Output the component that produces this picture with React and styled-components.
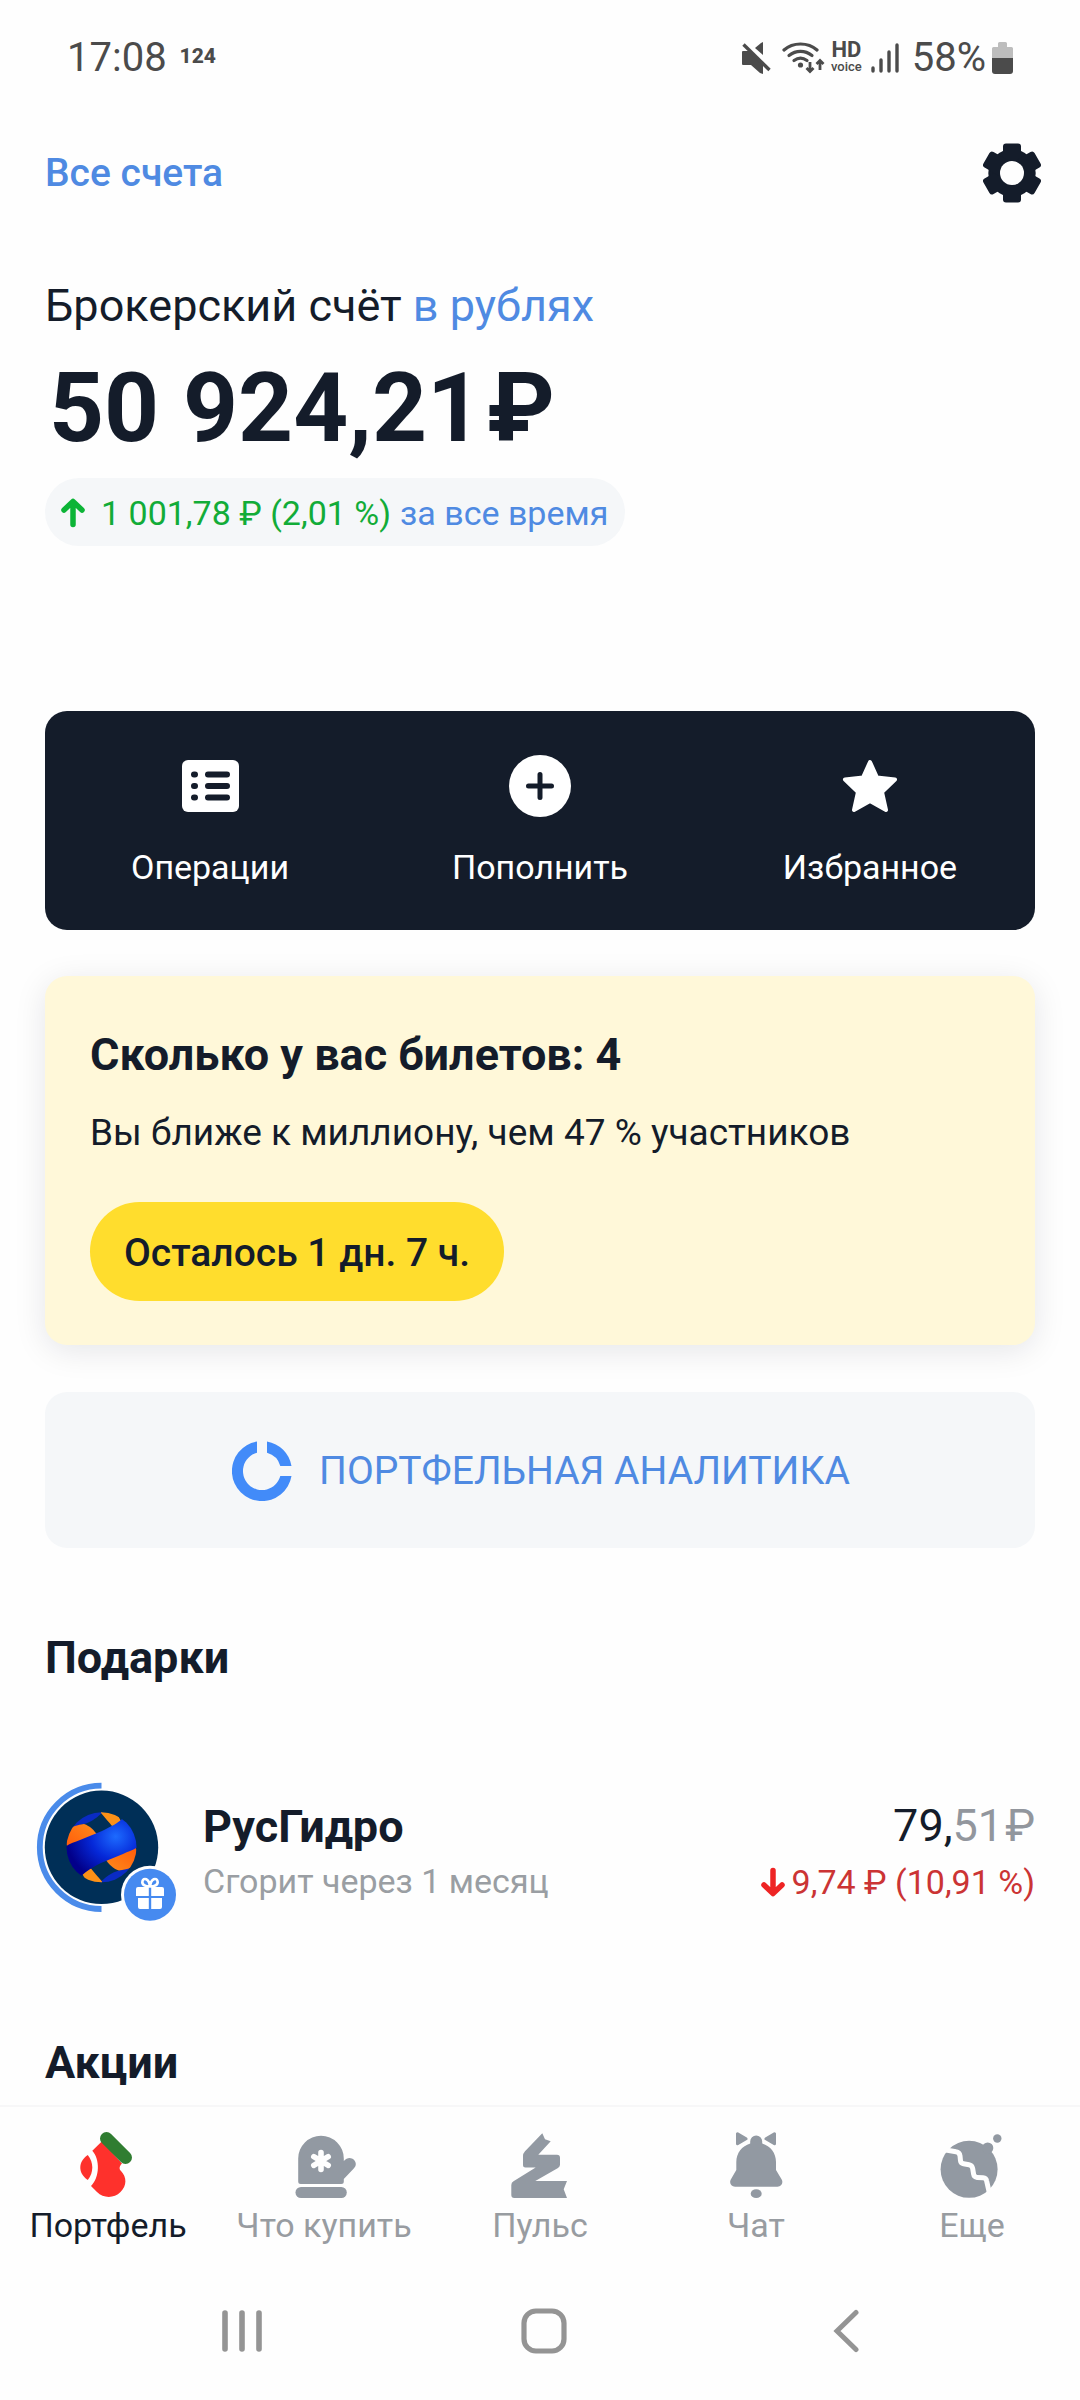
import React from "react";
import styled, { createGlobalStyle } from "styled-components";

const GlobalStyle = createGlobalStyle`
  * {
    box-sizing: border-box;
  }

  body {
    margin: 0;
    background: #fefefe;
    color: #141c2a;
    font-family: Roboto, "Noto Sans", sans-serif;
  }

  svg {
    display: block;
    flex-shrink: 0;
  }

  button {
    border: 0;
    padding: 0;
    background: none;
    color: inherit;
    font: inherit;
    cursor: pointer;
  }

  a {
    color: inherit;
    text-decoration: none;
  }
`;

const Page = styled.div`
  display: flex;
  flex-direction: column;
  min-height: 100vh;
`;

const StatusBar = styled.div`
  display: flex;
  justify-content: space-between;
  align-items: center;
  height: 115px;
  padding: 0 67px;
  color: #4b4b4b;
  font-size: 40px;
  line-height: 48px;
`;

const StatusGroup = styled.div`
  display: flex;
  align-items: center;
  gap: ${props => props.$gap}px;
`;

const Carrier = styled.span`
  padding-bottom: 4px;
  font-size: 21px;
  font-weight: 800;
  line-height: 24px;
`;

const HdVoice = styled.span`
  display: flex;
  flex-direction: column;
  align-items: center;
  margin: 0 -2px 0 -5px;
  padding-bottom: 3px;
  font-size: 13px;
  font-weight: 500;
  line-height: 13px;
`;

const Hd = styled.b`
  font-size: 22px;
  line-height: 20px;
`;

const Battery = styled.span`
  display: flex;
  align-items: center;
  gap: 6px;
`;

const Header = styled.header`
  display: flex;
  justify-content: space-between;
  align-items: center;
  height: 115px;
  padding: 0 38px 0 45px;
`;

const AccountsLink = styled.a`
  && {
    color: #4f8ae2;
  }
  font-size: 39px;
  font-weight: 500;
  line-height: 48px;
`;

const Main = styled.main`
  display: flex;
  flex-direction: column;
  padding: 48px 45px 12px;
`;

const AccountTitle = styled.h1`
  margin: 0 0 18px;
  font-size: 45px;
  font-weight: 400;
  line-height: 56px;
`;

const CurrencyButton = styled.button`
  && {
    color: #4f8ae2;
  }
`;

const Amount = styled.p`
  display: flex;
  gap: 5px;
  margin: 0 0 14px;
  padding-left: 4px;
  font-size: 96px;
  font-weight: 700;
  line-height: 112px;
`;

const ProfitPill = styled.button`
  && {
    display: flex;
    align-items: center;
    align-self: flex-start;
    height: 68px;
    margin-bottom: 165px;
    padding: 2px 17px 0 16px;
    border-radius: 34px;
    background: #f5f7f9;
    color: #4f8ae2;
    font-size: 34px;
    line-height: 44px;
  }
`;

const Profit = styled.span`
  margin: 0 9px 0 16px;
  color: #12ac38;
`;

const Actions = styled.div`
  display: grid;
  grid-template-columns: repeat(3, 1fr);
  margin-bottom: 46px;
  border-radius: 22px;
  background: #141c2a;
  color: #fff;
`;

const Action = styled.button`
  && {
    display: flex;
    flex-direction: column;
    align-items: center;
    gap: 28px;
    padding: 44px 0 41px;
    font-size: 34px;
    line-height: 44px;
  }
`;

const Tickets = styled.section`
  display: flex;
  flex-direction: column;
  align-items: flex-start;
  margin-bottom: 47px;
  padding: 51px 45px 44px;
  border-radius: 22px;
  background: #fff8d9;
  box-shadow: 0 6px 32px rgba(0, 16, 36, 0.1);
`;

const CardTitle = styled.h2`
  margin: 0;
  font-size: 45px;
  font-weight: 700;
  line-height: 56px;
`;

const TicketsText = styled.p`
  margin: 26px 0 45px;
  font-size: 37px;
  line-height: 48px;
`;

const TimeLeft = styled.button`
  && {
    height: 99px;
    padding: 2px 34px 0;
    border-radius: 50px;
    background: #ffdd2d;
    font-size: 39px;
    font-weight: 500;
  }
`;

const Analytics = styled.button`
  && {
    display: flex;
    justify-content: center;
    align-items: center;
    gap: 27px;
    height: 156px;
    margin-bottom: 82px;
    padding: 2px 0 0 2px;
    border-radius: 22px;
    background: #f5f7f9;
    color: #4f8ae2;
    font-size: 39px;
    text-transform: uppercase;
  }
`;

const Holding = styled.a`
  display: flex;
  align-items: center;
  margin: 96px 0 111px -9px;
`;

const HoldingInfo = styled.div`
  display: flex;
  flex-direction: column;
  flex: 1;
  gap: 4px;
  padding: 0 0 5px 23px;
`;

const HoldingValue = styled.div`
  display: flex;
  flex-direction: column;
  align-items: flex-end;
  gap: 6px;
  padding-bottom: 5px;
`;

const Name = styled.span`
  font-size: 45px;
  font-weight: 700;
  line-height: 56px;
`;

const Note = styled.span`
  color: #9a9ea3;
  font-size: 34px;
  line-height: 44px;
`;

const Price = styled.span`
  display: flex;
  font-size: 45px;
  line-height: 56px;
`;

const Cents = styled.span`
  display: flex;
  gap: 2px;
  color: #92969d;
`;

const Loss = styled.span`
  display: flex;
  align-items: center;
  gap: 7px;
  color: #cb3434;
  font-size: 34px;
  line-height: 44px;
`;

const Bottom = styled.div`
  margin-top: auto;
`;

const Tabs = styled.nav`
  display: grid;
  grid-template-columns: repeat(5, 1fr);
  border-top: 2px solid #f7f7f8;
`;

const Tab = styled.a`
  display: flex;
  flex-direction: column;
  align-items: center;
  gap: 4px;
  padding: 24px 0 15px;
  font-size: 34px;
  line-height: 44px;
  white-space: nowrap;
  && {
    color: ${props => (props.$active ? "#141c2a" : "#989ca1")};
  }
`;

const SystemNav = styled.div`
  display: grid;
  grid-template-columns: repeat(3, 1fr);
  height: 138px;
  padding: 0 83px 0 91px;
`;

const SystemButton = styled.button`
  && {
    display: flex;
    justify-content: center;
    align-items: center;
  }
`;

const GREY = "#9299a2";

const MuteIcon = () => (
  <svg width="30" height="32" viewBox="0 0 30 32" fill="#4b4b4b">
    <path d="M2 9h6l14 14v9l-3-1-9-8H2a1 1 0 0 1-1-1V10a1 1 0 0 1 1-1z" />
    <path d="M22 0v13l-8-7 6-5z" />
    <path d="M2.500 2.500l26 25.500" stroke="#4b4b4b" strokeWidth="3.400" />
  </svg>
);

const WifiIcon = () => (
  <svg width="43" height="32" viewBox="0 0 43 32" fill="none" stroke="#4b4b4b">
    <g strokeWidth="3.200" strokeLinecap="round">
      <path d="M2 8C11 0 26 0 35 8" />
      <path d="M7 13.500c7-5.500 16-5.500 23 0" />
      <path d="M12 18.500c4-3 9-3 13 0" />
    </g>
    <circle cx="18.500" cy="23" r="2.600" fill="#4b4b4b" stroke="none" />
    <path d="M28 20v9M24.500 26l3.500 3.500 3.500-3.500" strokeWidth="2.800" />
    <path d="M38 28v-9M34.500 22l3.500-3.500 3.500 3.500" strokeWidth="2.800" />
  </svg>
);

const SignalIcon = () => (
  <svg width="30" height="30" viewBox="0 0 30 30" stroke="#4b4b4b" strokeWidth="3.400" strokeLinecap="round">
    <path d="M2 25v3M10 17v11M18 9v19M26 2v26" />
  </svg>
);

const BatteryIcon = () => (
  <svg width="21" height="32" viewBox="0 0 21 32">
    <path d="M6 1.500Q6 0 7.500 0h6Q15 0 15 1.500V5h4.500Q21 5 21 6.500V16H0V6.500Q0 5 1.500 5H6z" fill="#bdbdbd" />
    <path d="M0 16h21v13q0 3-3 3H3q-3 0-3-3z" fill="#4b4b4b" />
  </svg>
);

const GearIcon = () => (
  <svg width="60" height="60" viewBox="-30 -30 60 60" fill="#141c2a">
    <circle r="23.700" />
    {[0, 60, 120].map(angle => (
      <rect key={angle} x="-9" y="-29.500" width="18" height="59" rx="3" transform={`rotate(${angle})`} />
    ))}
    <circle r="12" fill="#fefefe" />
  </svg>
);

const ArrowIcon = ({ down }) => (
  <svg
    width="24"
    height="30"
    viewBox="0 0 24 30"
    fill="none"
    stroke={down ? "#ee2424" : "#0cb437"}
    strokeWidth="5.500"
    strokeLinecap="round"
    strokeLinejoin="round"
  >
    {down ? <path d="M12 3.500v22M3 18l9 8.500 9-8.500" /> : <path d="M12 26.500v-22M3 12l9-8.500 9 8.500" />}
  </svg>
);

const OperationsIcon = () => (
  <svg width="62" height="62" viewBox="0 0 62 62">
    <rect x="3" y="5" width="57" height="52" rx="6" fill="#fff" />
    <path
      d="M15 19.500h1M15 31h1M15 42.500h1M29 19.500h19M29 31h19M29 42.500h19"
      stroke="#141c2a"
      strokeWidth="6"
      strokeLinecap="round"
    />
  </svg>
);

const PlusIcon = () => (
  <svg width="62" height="62" viewBox="0 0 62 62">
    <circle cx="31" cy="31" r="31" fill="#fff" />
    <path d="M31 19.500v23M19.500 31h23" stroke="#141c2a" strokeWidth="5" strokeLinecap="round" />
  </svg>
);

const StarIcon = () => (
  <svg width="62" height="62" viewBox="0 0 62 62">
    <path
      d="M31 7l7 15.500 18 2-13 12.500 4 18-16-9-16 9 4-18L6 24.500l18-2z"
      fill="#fff"
      stroke="#fff"
      strokeWidth="4"
      strokeLinejoin="round"
    />
  </svg>
);

const DonutIcon = () => (
  <svg width="60" height="60" viewBox="0 0 60 60" fill="#428bf9">
    <path d="M25 0.500A30 30 0 1 0 59.500 35H48.300A19 19 0 1 1 25 11.700z" />
    <path d="M35 0.500A30 30 0 0 1 59.500 25H48.300A19 19 0 0 0 35 11.700z" />
  </svg>
);

const RusHydroLogo = () => (
  <svg width="144" height="142" viewBox="0 0 144 142">
    <defs>
      <radialGradient id="band" cx="0.680" cy="0.350" r="0.650">
        <stop offset="0" stopColor="#1d6bff" />
        <stop offset="0.500" stopColor="#0528d8" />
        <stop offset="1" stopColor="#02008a" />
      </radialGradient>
      <linearGradient id="flame" x1="0" y1="1" x2="1" y2="0">
        <stop offset="0" stopColor="#ff5a0a" />
        <stop offset="1" stopColor="#ff8c1c" />
      </linearGradient>
      <clipPath id="sphere">
        <circle cx="65.500" cy="65.300" r="35" />
      </clipPath>
      <g id="half">
        <path d="M30 48C38 34 50 28 68 29C63 34 56 40 48 42C42 43 36 46 30 48z" fill="#0a2bc4" />
        <path d="M30 62V48C36 44 42 43 48 42C54 44 58 48 62 54L32 66z" fill="url(#flame)" />
        <path d="M65 29L80 30L86 41C84 44 80 44 76 44C73 40 69 36 65 31z" fill="#fd9117" />
      </g>
    </defs>
    <path d="M65.500 3.600a61.700 61.700 0 0 0 0 123.400" fill="none" stroke="#4a8bea" strokeWidth="5.800" />
    <circle cx="65.500" cy="65.300" r="56.700" fill="#002f57" />
    <g clipPath="url(#sphere)">
      <use href="#half" />
      <use href="#half" transform="rotate(180 65.500 65.300)" />
      <path
        d="M28 66C33 61 38 61 44 58L66 49C76 44 82 41 86 37L104 30V63C98 69 93 69 87 72L65 81C55 86 51 89 45 94L28 100z"
        fill="url(#band)"
      />
    </g>
    <circle cx="114" cy="112.700" r="29" fill="#fefefe" />
    <circle cx="114" cy="112.700" r="26" fill="#468af0" />
    <path
      d="M102 105h10.800v9H100v-7q0-2 2-2zM115.200 105H126q2 0 2 2v7h-12.800zM102 116h10.800v11H104q-2 0-2-2zM115.200 116H126v9q0 2-2 2h-8.800z"
      fill="#fff"
    />
    <path
      d="M114 104.500c-5 0-8.500-2-7.500-5.500s6.500-3 7.500 5.500c1-8.500 6.500-9 7.500-5.500s-2.500 5.500-7.500 5.500z"
      fill="none"
      stroke="#fff"
      strokeWidth="2.600"
    />
  </svg>
);

const StockingIcon = () => (
  <svg width="66" height="68" viewBox="0 0 66 68">
    <path
      d="M27 10.300L17.300 19.700C25 28 25 46 16 55l6 6c6.500 6.500 17 6.500 23.500 0 6.500-6 6.500-15 .5-21-2-2-2-4.500 1-7.500z"
      fill="#fe312c"
    />
    <path d="M12.800 24c6 7.500 6 17.500 0 25-10-6.500-10-18.500 0-25z" fill="#fe312c" />
    <path d="M31.500 7.500L50.500 26.500" stroke="#307d31" strokeWidth="13" strokeLinecap="round" />
  </svg>
);

const MittenIcon = () => (
  <svg width="66" height="68" viewBox="0 0 66 68" fill={GREY}>
    <path d="M7.200 27.500a22.800 22.800 0 0 1 45.600 0v2.500c5-6 12-2 12 3 0 2-1 3.500-2.500 5L52.800 48v2.500q0 2.500-2.500 2.500H9.700q-2.500 0-2.500-2.500z" />
    <rect x="4.500" y="56" width="51.300" height="11" rx="5.500" />
    <path
      d="M30 21.500v17M22.800 25.700l14.400 8.600M37.200 25.700l-14.400 8.600"
      stroke="#fefefe"
      strokeWidth="5.600"
      strokeLinecap="round"
    />
  </svg>
);

const PulseIcon = () => (
  <svg width="66" height="68" viewBox="0 0 66 68" fill={GREY}>
    <path d="M35.300 2.300L38 8.300l5.700 2L31.300 23.700H50q3 0 3 3v7q0 2-2 3.300L28.300 50H60l-3.300 8.300L60 67H7.300q-3 0-3-3V54q0-2.500 2.200-3.800L28.700 36.600H18.500q-2.500 0-2.500-2.500V25q0-2.500 2-4.700z" />
  </svg>
);

const BellIcon = () => (
  <svg width="66" height="68" viewBox="0 0 66 68" fill={GREY}>
    <path d="M27.200 10.500a6 6 0 0 1 12 0v2C47.500 15 53 22 53 31v8l5.700 9.500c1.800 3.500-.2 7.200-4.200 7.200H12c-4 0-6-3.700-4.200-7.200L13.300 39v-8c0-9 5.700-16 13.900-18.500z" />
    <ellipse cx="33.200" cy="62.700" rx="5.500" ry="4.400" />
    <path
      d="M14.500 2.800v10l8.500-5zM51.500 2.800v10l-8.500-5z"
      stroke={GREY}
      strokeWidth="3"
      strokeLinejoin="round"
    />
  </svg>
);

const PlanetIcon = () => (
  <svg width="66" height="68" viewBox="0 0 66 68" fill={GREY}>
    <circle cx="30.100" cy="38.300" r="28.500" />
    <circle cx="48.700" cy="17" r="5.600" />
    <circle cx="58.300" cy="7.500" r="4.200" />
    <path
      d="M4 18.500l13 2.300q3.500.5 4 4l.5 5q.3 2.500 3 3l5.500.9q3 .5 3.600 3.500l1 6q.5 3 3.500 3.200l6 .3q3 .2 3.500 3l2.500 11"
      fill="none"
      stroke="#fefefe"
      strokeWidth="5"
    />
  </svg>
);

const RecentsIcon = () => (
  <svg width="40" height="44" viewBox="0 0 40 44" stroke="#949494" strokeWidth="5.600" strokeLinecap="round">
    <path d="M3 4v36M20 4v36M37 4v36" />
  </svg>
);

const HomeIcon = () => (
  <svg width="46" height="46" viewBox="0 0 46 46" fill="none" stroke="#949494" strokeWidth="5.200">
    <rect x="3" y="3" width="40" height="40" rx="12" />
  </svg>
);

const BackIcon = () => (
  <svg width="26" height="44" viewBox="0 0 26 44" fill="none" stroke="#949494" strokeWidth="5" strokeLinecap="round">
    <path d="M23 3.500L4 22l19 18.500" />
  </svg>
);

const actions = [
  { label: "Операции", Icon: OperationsIcon },
  { label: "Пополнить", Icon: PlusIcon },
  { label: "Избранное", Icon: StarIcon }
];

const tabs = [
  { label: "Портфель", Icon: StockingIcon, active: true },
  { label: "Что купить", Icon: MittenIcon },
  { label: "Пульс", Icon: PulseIcon },
  { label: "Чат", Icon: BellIcon },
  { label: "Еще", Icon: PlanetIcon }
];

const App = () => (
  <>
    <GlobalStyle />
    <Page>
      <StatusBar>
        <StatusGroup $gap={13}>
          <span>17:08</span>
          <Carrier>124</Carrier>
        </StatusGroup>
        <StatusGroup $gap={11}>
          <MuteIcon />
          <WifiIcon />
          <HdVoice>
            <Hd>HD</Hd>
            voice
          </HdVoice>
          <SignalIcon />
          <Battery>
            58%
            <BatteryIcon />
          </Battery>
        </StatusGroup>
      </StatusBar>
      <Header>
        <AccountsLink href="#accounts">Все счета</AccountsLink>
        <button type="button" aria-label="Настройки">
          <GearIcon />
        </button>
      </Header>
      <Main>
        <AccountTitle>
          Брокерский счёт <CurrencyButton type="button">в рублях</CurrencyButton>
        </AccountTitle>
        <Amount>
          <span>50 924,21</span>
          <span>₽</span>
        </Amount>
        <ProfitPill type="button">
          <ArrowIcon />
          <Profit>1 001,78 ₽ (2,01 %)</Profit>
          за все время
        </ProfitPill>
        <Actions>
          {actions.map(({ label, Icon }) => (
            <Action key={label} type="button">
              <Icon />
              {label}
            </Action>
          ))}
        </Actions>
        <Tickets>
          <CardTitle>Сколько у вас билетов: 4</CardTitle>
          <TicketsText>Вы ближе к миллиону, чем 47 % участников</TicketsText>
          <TimeLeft type="button">Осталось 1 дн. 7 ч.</TimeLeft>
        </Tickets>
        <Analytics type="button">
          <DonutIcon />
          Портфельная аналитика
        </Analytics>
        <CardTitle>Подарки</CardTitle>
        <Holding href="#rushydro">
          <RusHydroLogo />
          <HoldingInfo>
            <Name>РусГидро</Name>
            <Note>Сгорит через 1 месяц</Note>
          </HoldingInfo>
          <HoldingValue>
            <Price>
              79,
              <Cents>
                <span>51</span>
                <span>₽</span>
              </Cents>
            </Price>
            <Loss>
              <ArrowIcon down />
              9,74 ₽ (10,91 %)
            </Loss>
          </HoldingValue>
        </Holding>
        <CardTitle>Акции</CardTitle>
      </Main>
      <Bottom>
        <Tabs>
          {tabs.map(({ label, Icon, active }) => (
            <Tab key={label} href="#tab" $active={active}>
              <Icon />
              {label}
            </Tab>
          ))}
        </Tabs>
        <SystemNav>
          <SystemButton type="button" aria-label="Недавние">
            <RecentsIcon />
          </SystemButton>
          <SystemButton type="button" aria-label="Домой">
            <HomeIcon />
          </SystemButton>
          <SystemButton type="button" aria-label="Назад">
            <BackIcon />
          </SystemButton>
        </SystemNav>
      </Bottom>
    </Page>
  </>
);

export default App;
